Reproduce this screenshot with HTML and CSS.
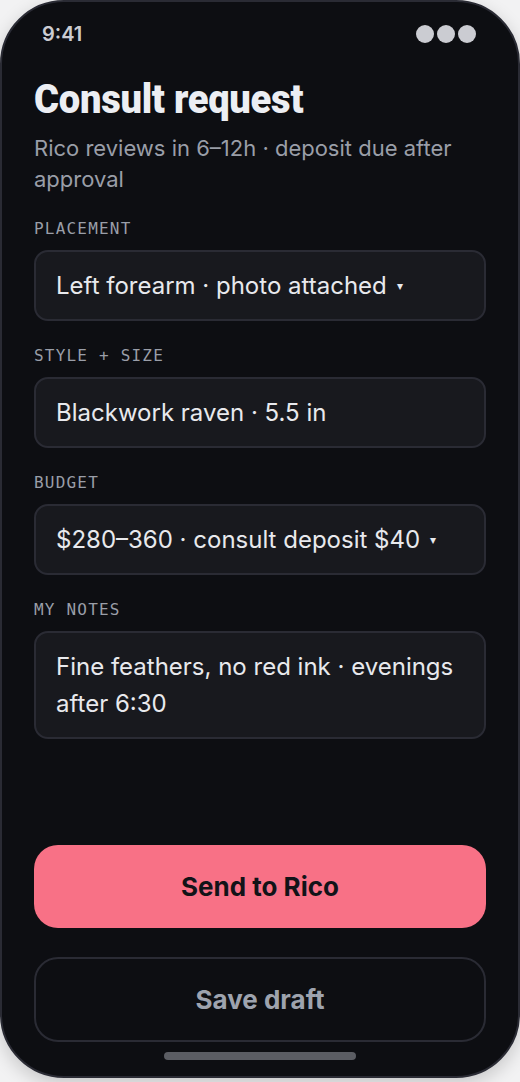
FILE: index.html
```html
<!DOCTYPE html>
<html lang="en">
<head>
<meta charset="utf-8">
<title>Consult request</title>
<link rel="stylesheet" href="styles.css">
</head>
<body>
<div class="phone">
  <div class="status">
    <span class="time">9:41</span>
    <span class="dots"><i></i><i></i><i></i></span>
  </div>
  <div class="content">
    <h1 class="title"><span>Consult request</span></h1>
    <p class="sub">Rico reviews in 6–12h · deposit due after approval</p>

    <div class="field">
      <div class="label">PLACEMENT</div>
      <div class="input">Left forearm · photo attached <span class="caret">▾</span></div>
    </div>
    <div class="field">
      <div class="label">STYLE + SIZE</div>
      <div class="input">Blackwork raven · 5.5 in</div>
    </div>
    <div class="field">
      <div class="label">BUDGET</div>
      <div class="input">$280–360 · consult deposit $40 <span class="caret">▾</span></div>
    </div>
    <div class="field">
      <div class="label">MY NOTES</div>
      <div class="input notes">Fine feathers, no red ink · evenings after 6:30</div>
    </div>

    <div class="actions">
      <button class="btn primary">Send to Rico</button>
      <button class="btn ghost">Save draft</button>
    </div>
  </div>
  <div class="home"><span></span></div>
</div>
</body>
</html>
```
FILE: styles.css
```css
html, body {
  margin: 0;
  padding: 0;
}
body {
  background: #f2f2f3;
  width: 520px;
  height: 1082px;
  font-family: Inter, "Noto Sans", sans-serif;
}
.phone {
  box-sizing: border-box;
  width: 520px;
  height: 1078px;
  background: #0d0e12;
  border: 2px solid #2a2b34;
  border-radius: 64px;
  display: flex;
  flex-direction: column;
  overflow: hidden;
  box-shadow: 0 6px 18px rgba(0,0,0,0.18);
}
.status {
  display: flex;
  justify-content: space-between;
  align-items: center;
  padding: 20px 42px 0 40px;
  height: 24px;
}
.time {
  color: #cbccd2;
  font-size: 20px;
  font-weight: 600;
}
.dots {
  display: flex;
  gap: 3px;
}
.dots i {
  width: 18px;
  height: 18px;
  border-radius: 50%;
  background: #cbccd2;
  display: block;
}
.content {
  flex: 1;
  display: flex;
  flex-direction: column;
  padding: 0 32px;
}
.title {
  margin: 29px 0 0;
  font-family: Roboto, "DejaVu Sans", sans-serif;
  font-weight: 900;
  font-size: 41px;
  line-height: 48px;
  color: #eceef3;
  white-space: nowrap;
}
.title span {
  display: inline-block;
  transform: scaleX(0.93);
  transform-origin: left center;
  letter-spacing: -0.3px;
}
.sub {
  margin: 10px 0 0;
  font-size: 22px;
  line-height: 31px;
  color: #9a9ea8;
}
.field {
  margin-top: 24px;
}
.field + .field {
  margin-top: 25px;
}
.label {
  font-family: "DejaVu Sans Mono", "Liberation Mono", monospace;
  font-size: 16px;
  letter-spacing: 1.2px;
  line-height: 20px;
  color: #9a9ea8;
}
.input {
  margin-top: 11px;
  box-sizing: border-box;
  min-height: 71px;
  background: #18191e;
  border: 2px solid #2a2b34;
  border-radius: 14px;
  padding: 18px 20px;
  font-size: 24px;
  line-height: 31px;
  color: #e8e9ed;
}
.notes {
  min-height: 107px;
  padding-top: 15px;
  padding-bottom: 15px;
  line-height: 37px;
}
.caret {
  font-size: 12px;
  vertical-align: 4px;
  margin-left: 3px;
}
.actions {
  margin-top: auto;
  display: flex;
  flex-direction: column;
  gap: 29px;
  padding-bottom: 10px;
}
.btn {
  font-family: Inter, "Noto Sans", sans-serif;
  font-weight: 700;
  font-size: 26px;
  border-radius: 24px;
  width: 100%;
  cursor: pointer;
}
.primary {
  height: 83px;
  background: #f87186;
  border: none;
  color: #121318;
}
.ghost {
  height: 85px;
  background: transparent;
  border: 2px solid #2a2b34;
  color: #9ea3ae;
}
.home {
  height: 24px;
  display: flex;
  justify-content: center;
}
.home span {
  width: 192px;
  height: 8px;
  border-radius: 4px;
  background: #5b5d63;
  display: block;
}
```
